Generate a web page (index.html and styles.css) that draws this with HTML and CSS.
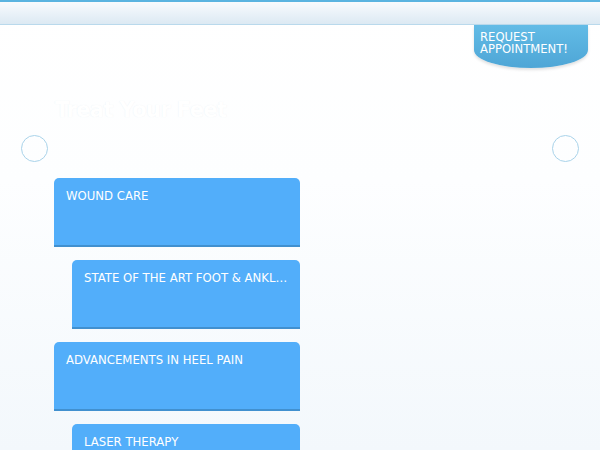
FILE: index.html
```html
<!DOCTYPE html>
<html>
<head>
<meta charset="utf-8">
<link rel="stylesheet" href="styles.css">
</head>
<body>
<div class="page">
  <header class="topbar"></header>
  <a class="appt">REQUEST<br>APPOINTMENT!</a>
  <h1 class="title">Treat Your Feet</h1>
  <div class="dots">
    <span class="dot"></span>
    <span class="dot"></span>
  </div>
  <ul class="list">
    <li class="card"><span class="label">WOUND CARE</span></li>
    <li class="card sub"><span class="label">STATE OF THE ART FOOT &amp; ANKLE SURGERY</span></li>
    <li class="card"><span class="label">ADVANCEMENTS IN HEEL PAIN</span></li>
    <li class="card sub"><span class="label">LASER THERAPY</span></li>
  </ul>
</div>
</body>
</html>
```
FILE: styles.css
```css
html, body {
  margin: 0;
  padding: 0;
  height: 100%;
  overflow: hidden;
}
body {
  font-family: "DejaVu Sans", sans-serif;
  background: linear-gradient(#ffffff 0%, #fdfeff 40%, #f3f8fc 100%);
}
.page {
  position: relative;
  height: 450px;
  overflow: hidden;
}
.topbar {
  height: 22px;
  border-top: 2px solid #5ab4e0;
  border-bottom: 1px solid #b9d9ec;
  background: linear-gradient(#f8fbfd, #dce9f3);
}
.appt {
  position: absolute;
  top: 25px;
  left: 474px;
  width: 102px;
  height: 31px;
  padding: 7px 6px 5px;
  color: #fff;
  font-size: 11.6px;
  line-height: 11.5px;
  background: linear-gradient(#62bbe6, #4ea6d6);
  border-radius: 0 0 57px 57px / 0 0 18px 18px;
  box-shadow: 0 2px 3px rgba(0, 0, 0, 0.12);
}
.title {
  margin: 72px 0 0 55px;
  height: 26px;
  font-family: "DejaVu Sans", sans-serif;
  font-size: 21px;
  letter-spacing: -0.6px;
  line-height: 26px;
  font-weight: bold;
  color: #ffffff;
  text-shadow: 0 0 1px rgba(190, 210, 225, 0.3);
}
.dots {
  display: flex;
  justify-content: space-between;
  padding: 0 21px 0 21px;
  margin-top: 12px;
}
.dot {
  width: 25px;
  height: 25px;
  border: 1px solid #a9d3ea;
  border-radius: 50%;
}
.list {
  list-style: none;
  margin: 16px 0 0 54px;
  padding: 0;
  width: 246px;
  display: flex;
  flex-direction: column;
  gap: 13px;
}
.card {
  height: 69px;
  box-sizing: border-box;
  background: #52aefa;
  border-bottom: 2px solid #4190cf;
  border-radius: 5px 5px 0 0;
  color: #fff;
  font-size: 11.7px;
  padding: 11px 12px 0;
}
.card.sub {
  margin-left: 18px;
}
.label {
  display: block;
  white-space: nowrap;
  overflow: hidden;
  text-overflow: ellipsis;
  line-height: 14px;
}
```
